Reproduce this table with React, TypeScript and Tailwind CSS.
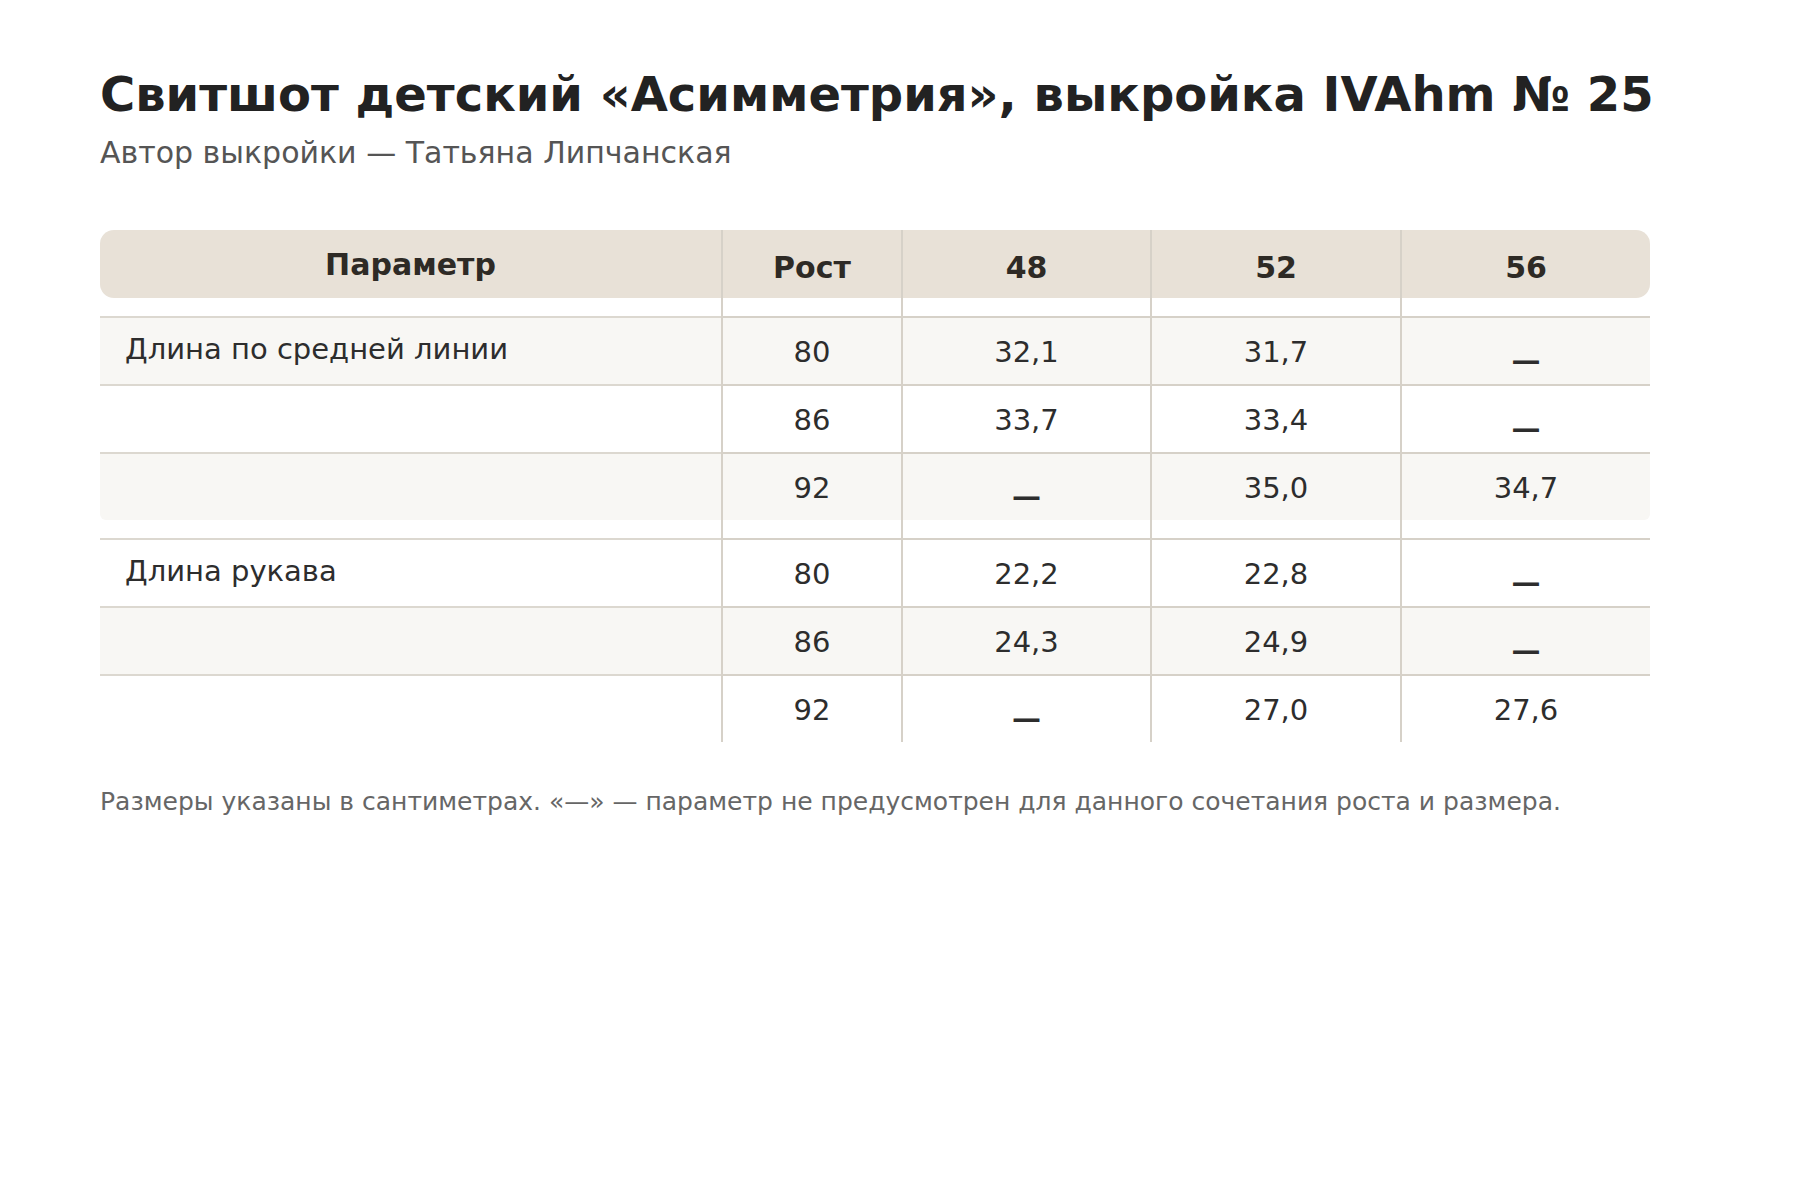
import React from 'react';

type Row = { rost: string; values: string[] };
type Group = { label: string; rows: Row[] };

const SIZES = ['48', '52', '56'];

const GROUPS: Group[] = [
  {
    label: 'Длина по средней линии',
    rows: [
      { rost: '80', values: ['32,1', '31,7', '—'] },
      { rost: '86', values: ['33,7', '33,4', '—'] },
      { rost: '92', values: ['—', '35,0', '34,7'] },
    ],
  },
  {
    label: 'Длина рукава',
    rows: [
      { rost: '80', values: ['22,2', '22,8', '—'] },
      { rost: '86', values: ['24,3', '24,9', '—'] },
      { rost: '92', values: ['—', '27,0', '27,6'] },
    ],
  },
];

const Value = ({ v }: { v: string }) =>
  v === '—' ? (
    <span className="inline-block translate-y-[8px] font-bold">—</span>
  ) : (
    <span>{v}</span>
  );

const Spacer = () => (
  <tr>
    <td className="h-[18px] p-0" />
    {[0, 1, 2, 3].map((i) => (
      <td key={i} className="h-[18px] border-l-2 border-[#d6d1c8] p-0" />
    ))}
  </tr>
);

const App = () => {
  let stripe = 0;
  return (
    <div
      className="min-h-screen bg-white px-[100px] pt-[65px]"
      style={{ fontFamily: '"DejaVu Sans", "Noto Sans", sans-serif' }}
    >
      <div className="w-[1550px]">
        <h1 className="whitespace-nowrap text-[48px] font-bold leading-[58px] text-[#222222]">
          Свитшот детский «Асимметрия», выкройка IVAhm № 25
        </h1>
        <p className="mt-[12px] text-[30px] leading-[36px] text-[#555555]">
          Автор выкройки — Татьяна Липчанская
        </p>

        <table className="mt-[59px] w-[1550px] table-fixed border-separate border-spacing-0 text-[29px] text-[#2d2d2d]">
          <colgroup>
            <col className="w-[621px]" />
            <col className="w-[180px]" />
            <col className="w-[249px]" />
            <col className="w-[250px]" />
            <col className="w-[250px]" />
          </colgroup>
          <thead>
            <tr className="text-[#2e2a25]">
              <th className="h-[68px] rounded-l-[14px] bg-[#e8e1d7] p-0 text-center text-[30px] font-bold">
                Параметр
              </th>
              <th className="h-[68px] border-l-2 border-[#d6d1c8] bg-[#e8e1d7] p-0 pt-[6px] text-center text-[30px] font-bold">
                Рост
              </th>
              {SIZES.map((s, i) => (
                <th
                  key={s}
                  className={`h-[68px] border-l-2 border-[#d6d1c8] bg-[#e8e1d7] p-0 pt-[6px] text-center text-[30px] font-bold ${
                    i === SIZES.length - 1 ? 'rounded-r-[14px]' : ''
                  }`}
                >
                  {s}
                </th>
              ))}
            </tr>
          </thead>
          {GROUPS.map((g) => (
            <tbody key={g.label}>
              <Spacer />
              {g.rows.map((r, ri) => {
                const shaded = stripe++ % 2 === 0;
                const last = ri === g.rows.length - 1;
                const bg = shaded ? 'bg-[#f8f7f4]' : 'bg-white';
                return (
                  <tr key={r.rost}>
                    <td
                      className={`h-[68px] border-t-2 border-[#dcd8d0] p-0 pb-[2px] pl-[25px] text-left ${bg} ${
                        last ? 'rounded-bl-[6px]' : ''
                      }`}
                    >
                      {ri === 0 ? g.label : ''}
                    </td>
                    <td className={`h-[68px] border-t-2 border-l-2 border-[#d6d1c8] p-0 pt-[4px] text-center ${bg}`}>
                      {r.rost}
                    </td>
                    {r.values.map((v, vi) => (
                      <td
                        key={vi}
                        className={`h-[68px] border-t-2 border-l-2 border-[#d6d1c8] p-0 pt-[4px] text-center ${bg} ${
                          last && vi === r.values.length - 1 ? 'rounded-br-[6px]' : ''
                        }`}
                      >
                        <Value v={v} />
                      </td>
                    ))}
                  </tr>
                );
              })}
            </tbody>
          ))}
        </table>

        <p className="mt-[45px] text-[25px] leading-[30px] text-[#666666]">
          Размеры указаны в сантиметрах. «—» — параметр не предусмотрен для данного сочетания роста и размера.
        </p>
      </div>
    </div>
  );
};

export default App;
